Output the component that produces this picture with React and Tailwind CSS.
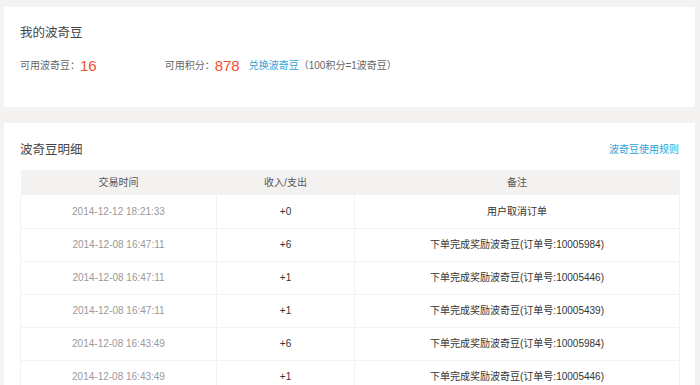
const rows = [
  { time: "2014-12-12 18:21:33", amount: "+0", note: "用户取消订单" },
  { time: "2014-12-08 16:47:11", amount: "+6", note: "下单完成奖励波奇豆(订单号:10005984)" },
  { time: "2014-12-08 16:47:11", amount: "+1", note: "下单完成奖励波奇豆(订单号:10005446)" },
  { time: "2014-12-08 16:47:11", amount: "+1", note: "下单完成奖励波奇豆(订单号:10005439)" },
  { time: "2014-12-08 16:43:49", amount: "+6", note: "下单完成奖励波奇豆(订单号:10005984)" },
  { time: "2014-12-08 16:43:49", amount: "+1", note: "下单完成奖励波奇豆(订单号:10005446)" },
];

const font = {
  fontFamily: '"Liberation Sans", "Noto Sans CJK SC", sans-serif',
};

export default function App() {
  return (
    <div
      className="h-[385px] w-[700px] overflow-hidden bg-[#f4f3f1] pl-[4px] pr-[5px] pt-[7px] text-[10px] text-[#333]"
      style={font}
    >
      <div className="h-[100px] bg-white px-4 pt-[17px]">
        <h2 className="text-[12.5px] leading-[18px] text-[#444]">我的波奇豆</h2>
        <div className="mt-[15px] flex items-center leading-[18px]">
          <span className="text-[#666]">可用波奇豆：</span>
          <span className="text-[15px] font-medium text-[#f2502c]">16</span>
          <span className="ml-[68px] text-[#666]">可用积分：</span>
          <span className="text-[15px] font-medium text-[#f2502c]">878</span>
          <a className="ml-[9px] text-[#2aa3d8]">兑换波奇豆</a>
          <span className="text-[#666]">（100积分=1波奇豆）</span>
        </div>
      </div>

      <div className="mt-[16px] bg-white px-4 pt-[18px]">
        <div className="flex items-center justify-between leading-[18px]">
          <h2 className="text-[12.5px] text-[#444]">波奇豆明细</h2>
          <a className="text-[#2aa3d8]">波奇豆使用规则</a>
        </div>
        <table className="mt-[11px] w-[660px] table-fixed border-collapse">
          <colgroup>
            <col className="w-[196px]" />
            <col className="w-[138px]" />
            <col />
          </colgroup>
          <thead>
            <tr className="h-[25px] bg-[#f4f2f0] text-[#555]">
              <th className="font-normal">交易时间</th>
              <th className="font-normal">收入/支出</th>
              <th className="font-normal">备注</th>
            </tr>
          </thead>
          <tbody>
            {rows.map((r, i) => (
              <tr key={i} className="h-[33px] border-b border-[#f3f3f3]">
                <td className="border-l border-[#f3f3f3] text-center text-[#999]">{r.time}</td>
                <td className="border-l border-[#f3f3f3] text-center text-[#333]">{r.amount}</td>
                <td className="border-x border-[#f3f3f3] text-center text-[#333]">{r.note}</td>
              </tr>
            ))}
          </tbody>
        </table>
      </div>
    </div>
  );
}
